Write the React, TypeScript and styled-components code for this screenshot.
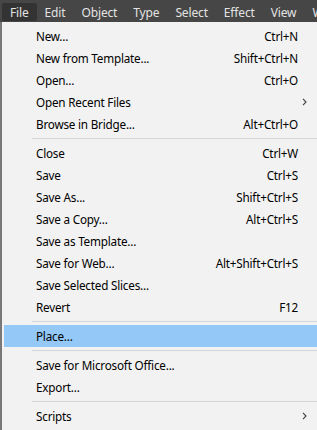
import React from 'react';
import styled, { createGlobalStyle } from 'styled-components';

const GlobalStyle = createGlobalStyle`
    html, body {
        margin: 0;
        padding: 0;
        background: #f2f2f2;
    }
    body {
        font-family: 'Noto Sans', 'Open Sans', 'Liberation Sans', sans-serif;
        font-size: 12px;
    }
`;

const Frame = styled.div`
    width: 317px;
    height: 430px;
    display: flex;
    flex-direction: column;
    overflow: hidden;
`;

const MenuBar = styled.div`
    height: 22px;
    flex: none;
    display: flex;
    align-items: stretch;
    padding: 3px 0 1px 2px;
    box-sizing: border-box;
    background: #464646;
    white-space: nowrap;
    overflow: hidden;
`;

const MenuTab = styled.div<{ $active?: boolean }>`
    display: flex;
    align-items: center;
    padding: 0 8px;
    border-radius: 2px;
    color: #e3e3e3;
    letter-spacing: -0.15px;
    background: ${(props) => (props.$active ? '#333333' : 'transparent')};
`;

const Dropdown = styled.div`
    flex: 1;
    display: flex;
    flex-direction: column;
    padding-top: 3px;
    background: #f2f2f2;
    border-left: 2px solid #787878;
`;

const Item = styled.div<{ $highlighted?: boolean }>`
    height: 22px;
    margin-left: 2px;
    display: grid;
    grid-template-columns: 1fr auto 19px;
    align-items: center;
    padding-left: 32px;
    color: #000;
    font-size: 11.7px;
    letter-spacing: -0.2px;
    background: ${(props) => (props.$highlighted ? '#94c8f6' : 'transparent')};
    white-space: nowrap;
`;

const Label = styled.span``;

const Shortcut = styled.span`
    text-align: right;
`;

const ArrowCell = styled.span`
    display: flex;
    align-items: center;
    padding-left: 4px;
`;

const Separator = styled.div`
    height: 1px;
    margin: 3px 0 3px 30px;
    background: #d6d6d6;
`;

const Chevron = () => (
    <svg width="5" height="8" viewBox="0 0 5 8">
        <path d="M1 0.8 L4 4 L1 7.2" fill="none" stroke="#404040" strokeWidth="1.1" />
    </svg>
);

type Entry =
    | { label: string; shortcut?: string; submenu?: boolean; highlighted?: boolean }
    | 'sep';

const ENTRIES: Entry[] = [
    { label: 'New...', shortcut: 'Ctrl+N' },
    { label: 'New from Template...', shortcut: 'Shift+Ctrl+N' },
    { label: 'Open...', shortcut: 'Ctrl+O' },
    { label: 'Open Recent Files', submenu: true },
    { label: 'Browse in Bridge...', shortcut: 'Alt+Ctrl+O' },
    'sep',
    { label: 'Close', shortcut: 'Ctrl+W' },
    { label: 'Save', shortcut: 'Ctrl+S' },
    { label: 'Save As...', shortcut: 'Shift+Ctrl+S' },
    { label: 'Save a Copy...', shortcut: 'Alt+Ctrl+S' },
    { label: 'Save as Template...' },
    { label: 'Save for Web...', shortcut: 'Alt+Shift+Ctrl+S' },
    { label: 'Save Selected Slices...' },
    { label: 'Revert', shortcut: 'F12' },
    'sep',
    { label: 'Place...', highlighted: true },
    'sep',
    { label: 'Save for Microsoft Office...' },
    { label: 'Export...' },
    'sep',
    { label: 'Scripts', submenu: true },
];

const TABS = ['File', 'Edit', 'Object', 'Type', 'Select', 'Effect', 'View', 'Window'];

export default function App() {
    return (
        <Frame>
            <GlobalStyle />
            <MenuBar>
                {TABS.map((tab, i) => (
                    <MenuTab key={tab} $active={i === 0}>
                        {tab}
                    </MenuTab>
                ))}
            </MenuBar>
            <Dropdown>
                {ENTRIES.map((entry, i) =>
                    entry === 'sep' ? (
                        <Separator key={i} />
                    ) : (
                        <Item key={i} $highlighted={entry.highlighted}>
                            <Label>{entry.label}</Label>
                            <Shortcut>{entry.shortcut}</Shortcut>
                            <ArrowCell>{entry.submenu && <Chevron />}</ArrowCell>
                        </Item>
                    ),
                )}
            </Dropdown>
        </Frame>
    );
}
